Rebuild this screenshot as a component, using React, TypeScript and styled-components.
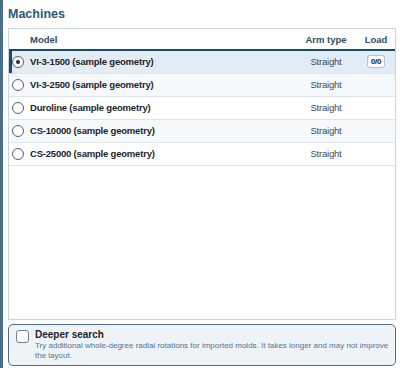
import React, { useState } from 'react';
import styled, { createGlobalStyle } from 'styled-components';

const GlobalStyle = createGlobalStyle`
  html, body {
    margin: 0;
    padding: 0;
    background: #ffffff;
    font-family: "Liberation Sans", Arial, sans-serif;
  }
`;

// 外层面板，左侧有一条深色竖线
const Panel = styled.div`
  width: 402px;
  height: 368px;
  box-sizing: border-box;
  border-left: 3px solid #4b6f8a;
  padding: 6px 6px 2px 5px;
  display: flex;
  flex-direction: column;
`;

const Title = styled.h2`
  margin: 0 0 6px 0;
  font-size: 12.5px;
  font-weight: 700;
  color: #2b5877;
  line-height: 16px;
`;

const TableBox = styled.div`
  flex: 1;
  border: 1px solid #c8d4de;
  background: #ffffff;
`;

const Table = styled.table`
  width: 100%;
  border-collapse: collapse;
  table-layout: fixed;
`;

const HeadCell = styled.th<{ $align?: string; $width?: number }>`
  box-sizing: border-box;
  text-align: ${(p) => p.$align || 'left'};
  font-weight: 700;
  color: #2f4d68;
  font-size: 9.5px;
  height: 21px;
  padding: 0;
  width: ${(p) => (p.$width ? `${p.$width}px` : 'auto')};
  border-bottom: 2px solid #1d4a6a;
`;

const Row = styled.tr<{ $selected?: boolean; $alt?: boolean }>`
  height: 23px;
  background: ${(p) => (p.$selected ? '#e2ecf4' : p.$alt ? '#f5f9fc' : '#ffffff')};
  border-bottom: 1px solid #dde5ec;
  box-shadow: ${(p) => (p.$selected ? 'inset 3px 0 0 #1d4a6a' : 'none')};
`;

const Cell = styled.td<{ $align?: string }>`
  text-align: ${(p) => p.$align || 'left'};
  padding: 0;
  font-size: 9.5px;
  letter-spacing: -0.2px;
  color: #3b4a59;
`;

const ModelWrap = styled.div`
  display: flex;
  align-items: center;
  gap: 6px;
  padding-left: 3px;
`;

const HeadLabel = styled.span`
  padding-left: 21px;
`;

const Radio = styled.span<{ $checked?: boolean }>`
  box-sizing: border-box;
  width: 12px;
  height: 12px;
  border: 1px solid #555f69;
  border-radius: 50%;
  display: inline-flex;
  align-items: center;
  justify-content: center;
  background: #ffffff;
  flex: none;
  &::after {
    content: '';
    width: 4px;
    height: 4px;
    border-radius: 50%;
    background: ${(p) => (p.$checked ? '#1f2a33' : 'transparent')};
  }
`;

const ModelName = styled.span`
  font-weight: 700;
  color: #1c242c;
`;

const LoadBadge = styled.span`
  display: inline-block;
  border: 1px solid #b7c3cd;
  border-radius: 3px;
  background: #ffffff;
  font-size: 8px;
  font-weight: 700;
  letter-spacing: -0.3px;
  color: #1c242c;
  padding: 1px 3px;
  line-height: 9px;
`;

const OptionBox = styled.label`
  margin-top: 4px;
  display: flex;
  gap: 6px;
  align-items: flex-start;
  border: 1px solid #4b6f8a;
  border-radius: 5px;
  background: #eef3f8;
  padding: 4px 3px 4px 7px;
`;

const CheckBox = styled.span`
  box-sizing: border-box;
  width: 13px;
  height: 13px;
  margin-top: 1px;
  border: 1px solid #7a8088;
  border-radius: 3px;
  background: #ffffff;
  flex: none;
`;

const OptionText = styled.div`
  display: flex;
  flex-direction: column;
`;

const OptionTitle = styled.span`
  font-size: 10px;
  font-weight: 700;
  color: #1c242c;
  line-height: 12px;
`;

const OptionDesc = styled.span`
  font-size: 8px;
  color: #4f7396;
  line-height: 10px;
`;

const machines = [
  'VI-3-1500 (sample geometry)',
  'VI-3-2500 (sample geometry)',
  'Duroline (sample geometry)',
  'CS-10000 (sample geometry)',
  'CS-25000 (sample geometry)',
];

export default function App() {
  const [selected, setSelected] = useState(0);
  return (
    <>
      <GlobalStyle />
      <Panel>
        <Title>Machines</Title>
        <TableBox>
          <Table>
            <thead>
              <tr>
                <HeadCell>
                  <HeadLabel>Model</HeadLabel>
                </HeadCell>
                <HeadCell $align="center" $width={62}>Arm type</HeadCell>
                <HeadCell $align="center" $width={38}>Load</HeadCell>
              </tr>
            </thead>
            <tbody>
              {machines.map((m, i) => (
                <Row key={m} $selected={i === selected} $alt={i % 2 === 1} onClick={() => setSelected(i)}>
                  <Cell>
                    <ModelWrap>
                      <Radio $checked={i === selected} />
                      <ModelName>{m}</ModelName>
                    </ModelWrap>
                  </Cell>
                  <Cell $align="center">Straight</Cell>
                  <Cell $align="center">{i === selected && <LoadBadge>0/0</LoadBadge>}</Cell>
                </Row>
              ))}
            </tbody>
          </Table>
        </TableBox>
        <OptionBox>
          <CheckBox />
          <OptionText>
            <OptionTitle>Deeper search</OptionTitle>
            <OptionDesc>
              Try additional whole-degree radial rotations for imported molds. It takes longer and may not improve
              the layout.
            </OptionDesc>
          </OptionText>
        </OptionBox>
      </Panel>
    </>
  );
}
